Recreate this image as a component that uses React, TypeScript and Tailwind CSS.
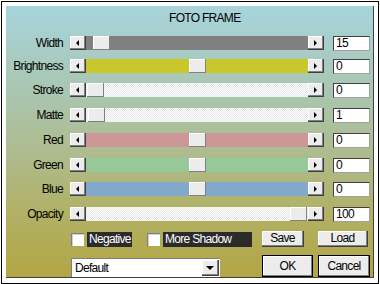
import React from 'react';

const font = "font-[family-name:'Liberation_Sans',Arial,sans-serif] tracking-[-0.7px]";

const rows = [
  { label: 'Width', value: '15', track: 'bg-[#808080]', thumb: 'ml-[7px]', mt: 'mt-0' },
  { label: 'Brightness', value: '0', track: 'bg-[#c8c82c]', thumb: 'ml-[103px]', mt: 'mt-[9px]' },
  { label: 'Stroke', value: '0', track: 'dither', thumb: 'ml-[1px]', mt: 'mt-[10px]' },
  { label: 'Matte', value: '1', track: 'dither', thumb: 'ml-[2px]', mt: 'mt-[11px]' },
  { label: 'Red', value: '0', track: 'bg-[#cd9697]', thumb: 'ml-[103px]', mt: 'mt-[11px]' },
  { label: 'Green', value: '0', track: 'bg-[#97c897]', thumb: 'ml-[103px]', mt: 'mt-[11px]' },
  { label: 'Blue', value: '0', track: 'bg-[#82a9c9]', thumb: 'ml-[103px]', mt: 'mt-[10px]' },
  { label: 'Opacity', value: '100', track: 'dither', thumb: 'ml-[204px]', mt: 'mt-[11px]' },
];

const raised = 'bg-[#ececec] shadow-[inset_-1px_-1px_#808080,inset_1px_1px_#ffffff]';

function ArrowButton({ dir }: { dir: 'left' | 'right' }) {
  return (
    <div className={`w-[16px] h-full flex items-center justify-center ${raised} border-r border-b border-[#404040]`}>
      {dir === 'left' ? (
        <div className="w-0 h-0 border-y-[3px] border-y-transparent border-r-[3px] border-r-black" />
      ) : (
        <div className="w-0 h-0 border-y-[3px] border-y-transparent border-l-[3px] border-l-black" />
      )}
    </div>
  );
}

function SliderRow({ row }: { row: (typeof rows)[number] }) {
  const trackBg =
    row.track === 'dither'
      ? 'bg-[repeating-conic-gradient(#ffffff_0%_25%,#e4e4e4_0%_50%)] bg-[length:2px_2px]'
      : row.track;
  return (
    <div className={`flex items-center h-[14px] ${row.mt}`}>
      <div className="w-[57px] text-right text-[12px] leading-[14px] text-black">{row.label}</div>
      <div className="ml-[7px] w-[254px] h-full flex">
        <ArrowButton dir="left" />
        <div className={`flex-1 h-full flex ${trackBg}`}>
          <div className={`w-[17px] h-full ${raised} ${row.thumb}`} />
        </div>
        <ArrowButton dir="right" />
      </div>
      <div className="ml-[9px] w-[37px] h-[15px] bg-white border-t border-l border-[#404040] border-r border-b border-r-[#a0a0a0] border-b-[#a0a0a0] text-[12px] leading-[13px] pl-[2px] text-black">
        {row.value}
      </div>
    </div>
  );
}

function Checkbox({ label, width }: { label: string; width: string }) {
  return (
    <div className="flex items-center">
      <div className="w-[13px] h-[13px] bg-white border-t border-l border-[#808080] border-r-white border-b-white shadow-[inset_1px_1px_#d0d0d0]" />
      <div className={`ml-[3px] h-[15px] bg-[#2b2b2b] text-white text-[12px] leading-[15px] px-[2px] whitespace-nowrap ${width}`}>
        {label}
      </div>
    </div>
  );
}

export default function App() {
  return (
    <div className={`w-[380px] h-[284px] bg-white p-px pb-0 ${font}`}>
      <div className="h-full border border-black p-[4px] pb-0">
        <div className="w-[368px] h-[272px] border-r border-b border-[#404040] bg-[linear-gradient(to_bottom,#a7d4db_0%,#a9c7b3_30%,#aebb8d_55%,#b1b063_78%,#b3a544_100%)] flex flex-col">
          <div className="h-[30px] pt-[5px] pl-[163px] text-[12px] leading-[14px] text-black">FOTO FRAME</div>
          {rows.map((row) => (
            <SliderRow key={row.label} row={row} />
          ))}
          <div className="mt-[10px] h-[16px] flex items-center">
            <div className="w-[256px] flex items-center pl-[65px]">
              <Checkbox label="Negative" width="w-[45px]" />
              <div className="ml-[15px]">
                <Checkbox label="More Shadow" width="w-[89px]" />
              </div>
            </div>
            <div className={`w-[42px] h-[16px] ${raised} border-r border-b border-[#404040] text-[12px] leading-[15px] text-center`}>Save</div>
            <div className={`ml-[14px] w-[50px] h-[16px] ${raised} border-r border-b border-[#404040] text-[12px] leading-[15px] text-center`}>Load</div>
          </div>
          <div className="mt-[8px] h-[22px] flex items-end">
            <div className="w-[256px] pl-[65px] flex">
              <div className="w-[149px] h-[19px] bg-white border-t border-l border-[#808080] flex items-center justify-between">
                <span className="pl-[3px] text-[12px] leading-[14px] text-black">Default</span>
                <div className={`w-[17px] h-[16px] mr-px ${raised} border-r border-b border-[#404040] flex items-center justify-center`}>
                  <div className="w-0 h-0 border-x-[4px] border-x-transparent border-t-[4px] border-t-black" />
                </div>
              </div>
            </div>
            <div className={`w-[51px] h-[22px] border border-black ${raised} text-[12px] leading-[20px] text-center`}>OK</div>
            <div className={`ml-[5px] w-[52px] h-[22px] border border-black ${raised} text-[12px] leading-[20px] text-center`}>Cancel</div>
          </div>
        </div>
      </div>
    </div>
  );
}
